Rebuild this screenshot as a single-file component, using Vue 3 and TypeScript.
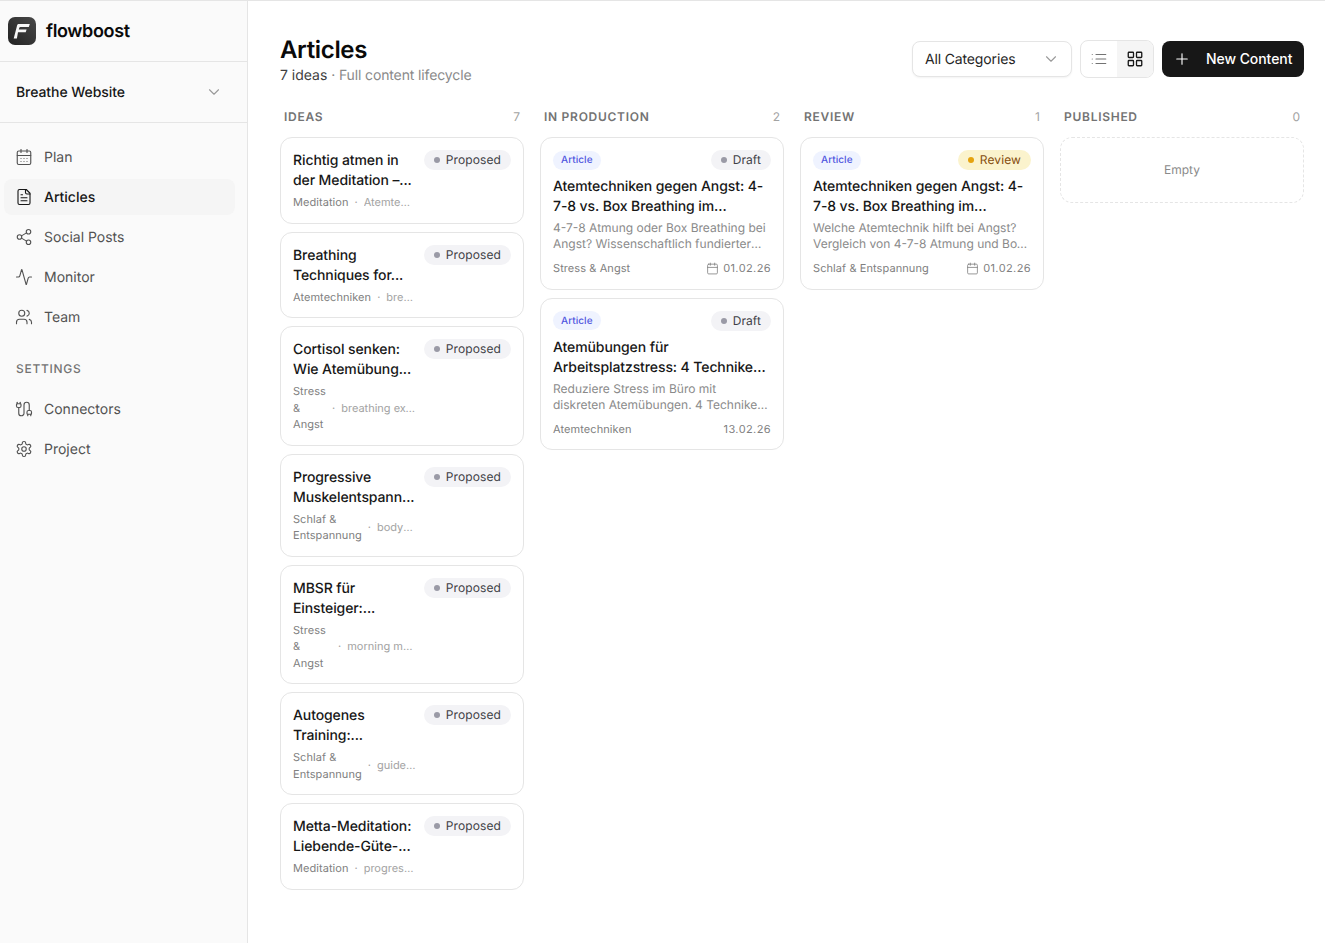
<script setup lang="ts">
interface Idea { title: string; cat: string; kw: string }
interface Art { title: string; text: string; cat: string; date: string; status: string; icon: boolean }

const ideas: Idea[] = [
  { title: 'Richtig atmen in der Meditation –...', cat: 'Meditation', kw: 'Atemtechniken' },
  { title: 'Breathing Techniques for...', cat: 'Atemtechniken', kw: 'breathing techniques' },
  { title: 'Cortisol senken: Wie Atemübung...', cat: 'Stress & Angst', kw: 'breathing exercises for cortisol levels' },
  { title: 'Progressive Muskelentspann...', cat: 'Schlaf & Entspannung', kw: 'body relaxation' },
  { title: 'MBSR für Einsteiger:...', cat: 'Stress & Angst', kw: 'morning meditation stress' },
  { title: 'Autogenes Training:...', cat: 'Schlaf & Entspannung', kw: 'guided training' },
  { title: 'Metta-Meditation: Liebende-Güte-...', cat: 'Meditation', kw: 'progressive meditation' }
]
const production: Art[] = [
  { title: 'Atemtechniken gegen Angst: 4-7-8 vs. Box Breathing im Vergleich', text: '4-7-8 Atmung oder Box Breathing bei Angst? Wissenschaftlich fundierter Vergleich beider Techniken für den Alltag.', cat: 'Stress & Angst', date: '01.02.26', status: 'Draft', icon: true },
  { title: 'Atemübungen für Arbeitsplatzstress: 4 Techniken für den Alltag', text: 'Reduziere Stress im Büro mit diskreten Atemübungen. 4 Techniken für mehr Ruhe am Arbeitsplatz und im Alltag.', cat: 'Atemtechniken', date: '13.02.26', status: 'Draft', icon: false }
]
const review: Art[] = [
  { title: 'Atemtechniken gegen Angst: 4-7-8 vs. Box Breathing im Vergleich', text: 'Welche Atemtechnik hilft bei Angst? Vergleich von 4-7-8 Atmung und Box Breathing mit Anleitung für den Alltag.', cat: 'Schlaf & Entspannung', date: '01.02.26', status: 'Review', icon: true }
]
const columns = [
  { name: 'IN PRODUCTION', count: 2, items: production },
  { name: 'REVIEW', count: 1, items: review }
]
const nav = [
  { label: 'Plan', icon: 'plan' },
  { label: 'Articles', icon: 'articles', active: true },
  { label: 'Social Posts', icon: 'social' },
  { label: 'Monitor', icon: 'monitor' },
  { label: 'Team', icon: 'team' }
]
const settings = [
  { label: 'Connectors', icon: 'connectors' },
  { label: 'Project', icon: 'project' }
]
const iconHtml: Record<string, string> = {
  plan: '<path d="M8 2v4"/><path d="M16 2v4"/><rect width="18" height="18" x="3" y="4" rx="2"/><path d="M3 10h18"/><path d="M8 14h.01"/><path d="M12 14h.01"/><path d="M16 14h.01"/><path d="M8 18h.01"/><path d="M12 18h.01"/><path d="M16 18h.01"/>',
  articles: '<path d="M15 2H6a2 2 0 0 0-2 2v16a2 2 0 0 0 2 2h12a2 2 0 0 0 2-2V7Z"/><path d="M14 2v4a2 2 0 0 0 2 2h4"/><path d="M10 9H8"/><path d="M16 13H8"/><path d="M16 17H8"/>',
  social: '<circle cx="18" cy="5" r="3"/><circle cx="6" cy="12" r="3"/><circle cx="18" cy="19" r="3"/><line x1="8.59" x2="15.42" y1="13.51" y2="17.49"/><line x1="15.41" x2="8.59" y1="6.51" y2="10.49"/>',
  monitor: '<path d="M22 12h-2.48a2 2 0 0 0-1.93 1.46l-2.35 8.36a.25.25 0 0 1-.48 0L9.24 2.18a.25.25 0 0 0-.48 0l-2.35 8.36A2 2 0 0 1 4.49 12H2"/>',
  team: '<path d="M16 21v-2a4 4 0 0 0-4-4H6a4 4 0 0 0-4 4v2"/><circle cx="9" cy="7" r="4"/><path d="M22 21v-2a4 4 0 0 0-3-3.87"/><path d="M16 3.13a4 4 0 0 1 0 7.75"/>',
  connectors: '<path d="M17 19a1 1 0 0 1-1-1v-2a2 2 0 0 1 2-2h2a2 2 0 0 1 2 2v2a1 1 0 0 1-1 1z"/><path d="M17 21v-2"/><path d="M19 14V6.5a1 1 0 0 0-7 0v11a1 1 0 0 1-7 0V10"/><path d="M21 21v-2"/><path d="M3 5V3"/><path d="M4 10a2 2 0 0 1-2-2V6a1 1 0 0 1 1-1h4a1 1 0 0 1 1 1v2a2 2 0 0 1-2 2z"/><path d="M7 5V3"/>',
  project: '<path d="M12.22 2h-.44a2 2 0 0 0-2 2v.18a2 2 0 0 1-1 1.73l-.43.25a2 2 0 0 1-2 0l-.15-.08a2 2 0 0 0-2.73.73l-.22.38a2 2 0 0 0 .73 2.73l.15.1a2 2 0 0 1 1 1.72v.51a2 2 0 0 1-1 1.74l-.15.09a2 2 0 0 0-.73 2.73l.22.38a2 2 0 0 0 2.73.73l.15-.08a2 2 0 0 1 2 0l.43.25a2 2 0 0 1 1 1.73V20a2 2 0 0 0 2 2h.44a2 2 0 0 0 2-2v-.18a2 2 0 0 1 1-1.73l.43-.25a2 2 0 0 1 2 0l.15.08a2 2 0 0 0 2.73-.73l.22-.39a2 2 0 0 0-.73-2.73l-.15-.08a2 2 0 0 1-1-1.74v-.5a2 2 0 0 1 1-1.74l.15-.09a2 2 0 0 0 .73-2.73l-.22-.38a2 2 0 0 0-2.73-.73l-.15.08a2 2 0 0 1-2 0l-.43-.25a2 2 0 0 1-1-1.73V4a2 2 0 0 0-2-2z"/><circle cx="12" cy="12" r="3"/>'
}
</script>

<template>
  <div class="app">
    <aside class="sidebar">
      <div class="brand">
        <svg class="logo" viewBox="0 0 28 28">
          <defs>
            <linearGradient id="lg" x1="0" y1="1" x2="1" y2="0">
              <stop offset="0" stop-color="#222" />
              <stop offset="1" stop-color="#484848" />
            </linearGradient>
          </defs>
          <rect width="28" height="28" rx="7" fill="url(#lg)" />
          <path d="M10.4 7h11.4l-1 2.9h-8.4c-.6 0-.9.3-1.1.8l-.5 1.8h7.8l-.9 2.8h-7.7L8.9 21.5H5.7l3-11.6c.4-1.8.8-2.9 1.7-2.9z" fill="#f7f7f7" />
        </svg>
        <span class="brand-name">flowboost</span>
      </div>
      <div class="project">
        <span>Breathe Website</span>
        <svg class="ic chev" viewBox="0 0 24 24"><path d="m6 9 6 6 6-6" /></svg>
      </div>
      <nav class="nav">
        <a v-for="n in nav" :key="n.label" class="nav-item" :class="{ active: n.active }">
          <svg class="ic" viewBox="0 0 24 24" v-html="iconHtml[n.icon]"></svg>
          <span>{{ n.label }}</span>
        </a>
        <div class="nav-title">SETTINGS</div>
        <a v-for="n in settings" :key="n.label" class="nav-item">
          <svg class="ic" viewBox="0 0 24 24" v-html="iconHtml[n.icon]"></svg>
          <span>{{ n.label }}</span>
        </a>
      </nav>
    </aside>

    <main class="main">
      <header class="head">
        <div>
          <h1>Articles</h1>
          <p class="sub"><b>7 ideas</b> · Full content lifecycle</p>
        </div>
        <div class="tools">
          <div class="select">
            <span>All Categories</span>
            <svg class="ic chev" viewBox="0 0 24 24"><path d="m6 9 6 6 6-6" /></svg>
          </div>
          <div class="toggle">
            <button class="tg">
              <svg class="ic" viewBox="0 0 24 24"><path d="M3 12h.01" /><path d="M3 18h.01" /><path d="M3 6h.01" /><path d="M8 12h13" /><path d="M8 18h13" /><path d="M8 6h13" /></svg>
            </button>
            <button class="tg on">
              <svg class="ic" viewBox="0 0 24 24"><rect width="7" height="7" x="3" y="3" rx="1" /><rect width="7" height="7" x="14" y="3" rx="1" /><rect width="7" height="7" x="14" y="14" rx="1" /><rect width="7" height="7" x="3" y="14" rx="1" /></svg>
            </button>
          </div>
          <button class="new">
            <svg class="ic" viewBox="0 0 24 24"><path d="M5 12h14" /><path d="M12 5v14" /></svg>
            <span class="new-label">New Content</span>
          </button>
        </div>
      </header>

      <section class="board">
        <div class="col">
          <div class="col-head"><span>IDEAS</span><span class="count">7</span></div>
          <div class="stack">
            <article v-for="i in ideas" :key="i.title" class="card idea">
              <div class="idea-left">
                <div class="title">{{ i.title }}</div>
                <div class="meta">
                  <span class="cat">{{ i.cat }}</span>
                  <span class="sep">·</span>
                  <span class="kw">{{ i.kw }}</span>
                </div>
              </div>
              <span class="badge"><i class="dot"></i><span class="bt">Proposed</span></span>
            </article>
          </div>
        </div>

        <div v-for="c in columns" :key="c.name" class="col">
          <div class="col-head"><span>{{ c.name }}</span><span class="count">{{ c.count }}</span></div>
          <div class="stack">
            <article v-for="a in c.items" :key="a.title + a.status" class="card">
              <div class="row">
                <span class="type">Article</span>
                <span class="badge" :class="{ rev: a.status === 'Review' }"><i class="dot"></i><span class="bt">{{ a.status }}</span></span>
              </div>
              <div class="title clamp">{{ a.title }}</div>
              <div class="excerpt clamp">{{ a.text }}</div>
              <div class="foot">
                <span>{{ a.cat }}</span>
                <span class="date">
                  <svg v-if="a.icon" class="ic cal" viewBox="0 0 24 24"><path d="M8 2v4" /><path d="M16 2v4" /><rect width="18" height="18" x="3" y="4" rx="2" /><path d="M3 10h18" /></svg>
                  {{ a.date }}
                </span>
              </div>
            </article>
          </div>
        </div>

        <div class="col">
          <div class="col-head"><span>PUBLISHED</span><span class="count">0</span></div>
          <div class="empty">Empty</div>
        </div>
      </section>
    </main>
  </div>
</template>

<style>
html, body { margin: 0; background: #fff; }
</style>

<style scoped>
* { box-sizing: border-box; }
.app {
  display: flex;
  min-height: 943px;
  border-top: 1px solid #e5e5e5;
  font-family: Inter, "Liberation Sans", sans-serif;
  color: #171717;
  -webkit-font-smoothing: antialiased;
  text-rendering: geometricPrecision;
}
.ic {
  width: 18px;
  height: 18px;
  flex: none;
  fill: none;
  stroke: currentColor;
  stroke-width: 1.5;
  stroke-linecap: round;
  stroke-linejoin: round;
}
.sidebar {
  width: 248px;
  flex: none;
  background: #fafafa;
  border-right: 1px solid #e5e5e5;
}
.brand {
  height: 61px;
  display: flex;
  align-items: center;
  gap: 10px;
  padding-left: 8px;
  border-bottom: 1px solid #e5e5e5;
}
.logo { width: 28px; height: 28px; flex: none; }
.brand-name { font-size: 18px; font-weight: 600; color: #0a0a0a; letter-spacing: -0.36px; }
.project {
  height: 61px;
  display: flex;
  align-items: center;
  justify-content: space-between;
  padding: 0 24px 0 16px;
  border-bottom: 1px solid #e5e5e5;
  font-size: 14px;
  font-weight: 500;
  letter-spacing: -0.07px;
}
.chev { color: #9a9a9a; }
.nav { padding: 16px 12px 0 4px; display: flex; flex-direction: column; gap: 4px; }
.nav-item {
  height: 36px;
  display: flex;
  align-items: center;
  gap: 11px;
  padding: 0 11px;
  border-radius: 8px;
  font-size: 14px;
  color: #525252;
}
.nav-item.active { background: #f5f5f5; color: #171717; font-weight: 500; }
.nav-title {
  margin: 22px 0 10px;
  padding-left: 12px;
  font-size: 12px;
  font-weight: 500;
  letter-spacing: 0.72px;
  color: #737373;
  line-height: 16px;
}
.main { flex: 1; min-width: 0; padding: 32px 21px 0 32px; }
.head { display: flex; justify-content: space-between; align-items: center; margin-bottom: 24px; }
h1 { margin: 0; font-size: 24px; font-weight: 600; line-height: 34px; color: #0a0a0a; letter-spacing: -0.35px; }
.sub { margin: 0; font-size: 14px; line-height: 18px; color: #8a8a8a; letter-spacing: -0.13px; }
.sub b { font-weight: 400; color: #404040; letter-spacing: 0; }
.tools { display: flex; align-items: center; gap: 8px; }
.select {
  width: 160px;
  height: 36px;
  display: flex;
  align-items: center;
  justify-content: space-between;
  padding: 0 11px 0 12px;
  background: #fff;
  border: 1px solid #e5e5e5;
  border-radius: 8px;
  box-shadow: 0 1px 2px rgba(0, 0, 0, 0.05);
  font-size: 14px;
  letter-spacing: -0.15px;
  color: #262626;
}
.toggle {
  display: flex;
  height: 38px;
  border: 1px solid #e5e5e5;
  border-radius: 8px;
  overflow: hidden;
  background: #fff;
}
.tg {
  width: 36px;
  border: 0;
  padding: 0;
  display: flex;
  align-items: center;
  justify-content: center;
  background: transparent;
  color: #737373;
}
.tg.on { background: #f5f5f5; color: #171717; }
.tg.on .ic { stroke-width: 1.75; }
.new {
  width: 142px;
  height: 36px;
  display: flex;
  align-items: center;
  gap: 15px;
  padding: 0 11px;
  border: 0;
  border-radius: 8px;
  background: #171717;
  color: #fff;
  white-space: nowrap;
  font: 500 14px Inter, "Liberation Sans", sans-serif;
  letter-spacing: -0.07px;
}
.new-label { padding-bottom: 2px; }
.board { display: grid; grid-template-columns: repeat(4, 244px); gap: 16px; align-items: start; }
.col-head {
  display: flex;
  justify-content: space-between;
  padding: 0 4px;
  margin-bottom: 12px;
  font-size: 12px;
  line-height: 16px;
  font-weight: 600;
  letter-spacing: 0.72px;
  color: #737373;
}
.count { font-weight: 400; letter-spacing: 0; color: #a3a3a3; }
.stack { display: flex; flex-direction: column; gap: 8px; }
.card {
  background: #fff;
  border: 1px solid #e5e5e5;
  border-radius: 12px;
  padding: 12px;
}
.idea { display: flex; align-items: flex-start; gap: 8px; }
.idea-left { flex: 1; min-width: 0; }
.title {
  font-size: 14px;
  line-height: 20px;
  font-weight: 500;
  letter-spacing: -0.1px;
  color: #171717;
  padding-top: 1px;
  margin-bottom: -1px;
}
.clamp {
  display: -webkit-box;
  -webkit-box-orient: vertical;
  -webkit-line-clamp: 2;
  overflow: hidden;
}
.meta {
  display: flex;
  align-items: center;
  gap: 6px;
  margin-top: 4px;
  font-size: 11px;
  line-height: 16.5px;
  letter-spacing: 0.05px;
  color: #808080;
}
.sep { color: #a3a3a3; flex: none; }
.kw {
  min-width: 0;
  color: #a3a3a3;
  letter-spacing: 0;
  white-space: nowrap;
  overflow: hidden;
  text-overflow: ellipsis;
}
.badge {
  display: inline-flex;
  align-items: center;
  gap: 6px;
  flex: none;
  height: 20px;
  padding: 0 10px;
  border-radius: 999px;
  background: #f3f3f6;
  font-size: 12px;
  letter-spacing: 0.1px;
  color: #3f3f46;
}
.bt { padding-bottom: 1px; }
.dot { width: 6px; height: 6px; border-radius: 50%; background: #9a9aa6; }
.badge.rev { background: #fbf3cd; color: #854d0e; }
.rev .dot { background: #e5a30f; }
.row { display: flex; justify-content: space-between; align-items: center; height: 20px; margin-bottom: 6px; }
.type {
  display: inline-flex;
  align-items: center;
  height: 19px;
  padding: 0 8px;
  border-radius: 999px;
  background: #eff3ff;
  color: #4f56e0;
  font-size: 10px;
  font-weight: 500;
  letter-spacing: 0.05px;
}
.excerpt { margin-top: 4px; font-size: 12px; line-height: 16px; color: #8a8a8a; }
.foot {
  display: flex;
  justify-content: space-between;
  align-items: center;
  margin-top: 8px;
  font-size: 11px;
  line-height: 16.5px;
  letter-spacing: 0.08px;
  color: #808080;
}
.date { display: flex; align-items: center; gap: 4px; letter-spacing: 0.4px; }
.cal { width: 13px; height: 13px; }
.empty {
  height: 66px;
  padding-bottom: 2px;
  display: flex;
  align-items: center;
  justify-content: center;
  border: 1px dashed #e5e5e5;
  border-radius: 12px;
  font-size: 12px;
  color: #8a8a8a;
}
</style>
